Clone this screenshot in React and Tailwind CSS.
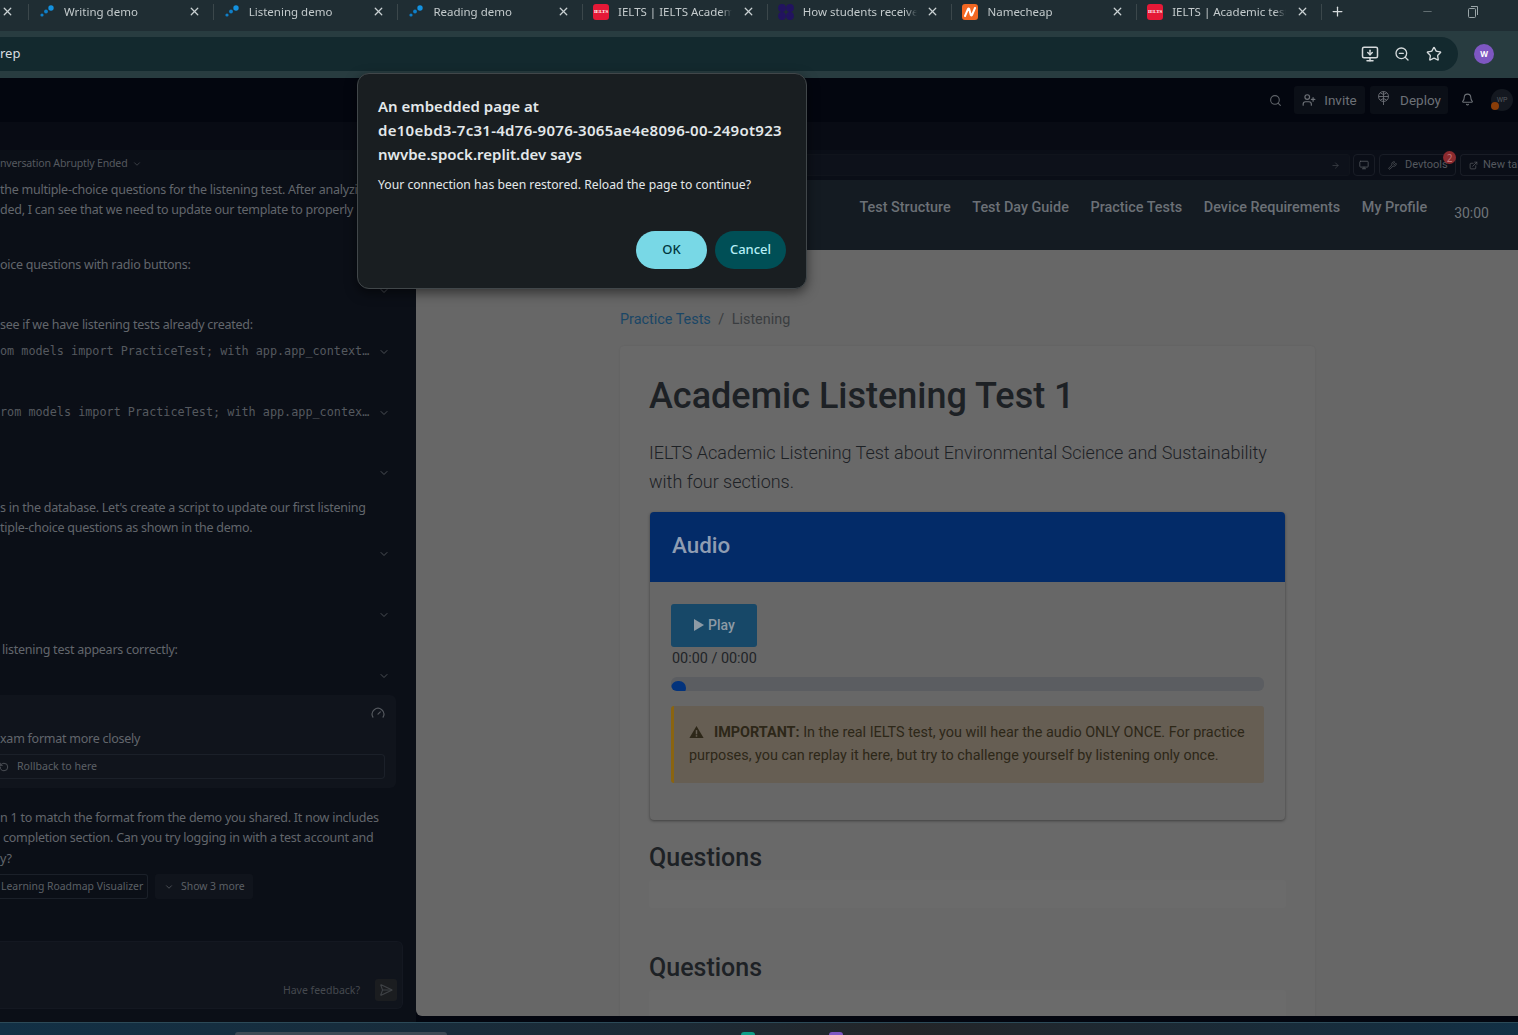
import React from 'react';
import { Bell, ChevronDown, ExternalLink, Gauge, Monitor, MonitorDown, Plus, RotateCcw, Search, SendHorizontal, Star, UserPlus, Wrench, X, ZoomOut, Minus, ArrowRight } from 'lucide-react';

const tabs = [
  { title: 'Writing demo', icon: 'dots' },
  { title: 'Listening demo', icon: 'dots' },
  { title: 'Reading demo', icon: 'dots' },
  { title: 'IELTS | IELTS Academic', icon: 'ielts' },
  { title: 'How students receive', icon: 'grid' },
  { title: 'Namecheap', icon: 'nc' },
  { title: 'IELTS | Academic test', icon: 'ielts' },
];

const Favicon = ({ type }) => {
  if (type === 'dots') {
    return (
      <svg width="16" height="16" viewBox="0 0 16 16" className="shrink-0">
        <circle cx="3" cy="11" r="1.6" fill="#0f7fc9" />
        <circle cx="7" cy="7.5" r="1.9" fill="#0f7fc9" />
        <circle cx="12" cy="4" r="2.7" fill="#1392e0" />
      </svg>
    );
  }
  if (type === 'ielts') {
    return (
      <div className="flex h-4 w-4 shrink-0 items-center justify-center rounded-[3px] bg-[#e51937] font-['Liberation_Serif',serif] text-[5px] font-bold leading-none text-white">
        IELTS
      </div>
    );
  }
  if (type === 'grid') {
    return (
      <svg width="16" height="16" viewBox="0 0 16 16" className="shrink-0">
        <circle cx="4" cy="4" r="3.9" fill="#22135f" />
        <circle cx="12" cy="4" r="3.9" fill="#22135f" />
        <circle cx="4" cy="12" r="3.9" fill="#22135f" />
        <circle cx="12" cy="12" r="3.9" fill="#22135f" />
      </svg>
    );
  }
  return (
    <div className="flex h-4 w-4 shrink-0 items-center justify-center rounded-[3px] bg-[#f26722]">
      <svg width="12" height="10" viewBox="0 0 12 10" fill="none">
        <path d="M1 9 L4 2 Q4.6 1 5.2 2 L6.8 8 Q7.4 9 8 8 L11 1" stroke="#fff" strokeWidth="2" strokeLinecap="round" />
      </svg>
    </div>
  );
};

const Tab = ({ tab }) => (
  <div className="flex h-4 w-[184.7px] shrink-0 items-center border-r border-[#3b474b] pl-[10px] pr-[12px]">
    <Favicon type={tab.icon} />
    <span className="ml-[9px] w-[114px] overflow-hidden whitespace-nowrap text-[11.5px] text-[#c4cbcd] [mask-image:linear-gradient(to_right,black_90%,transparent)]">
      {tab.title}
    </span>
    <X size={13} strokeWidth={2.4} className="ml-auto text-[#c9d0d2]" />
  </div>
);

const Row = ({ children, className = '' }) => (
  <div className={`h-5 whitespace-nowrap text-[12.5px] leading-5 tracking-[-0.25px] text-[#62666c] ${className}`}>{children}</div>
);

const ChevronRow = ({ children, className = '' }) => (
  <div className={`flex h-5 items-center justify-end pr-[26px] ${className}`}>
    {children && (
      <span className="mr-auto whitespace-nowrap font-['DejaVu_Sans_Mono',monospace] text-[11.8px] text-[#55595f]">{children}</span>
    )}
    <ChevronDown size={12} className="shrink-0 text-[#4b4f55]" />
  </div>
);

const Sidebar = () => (
  <aside className="flex w-[416px] shrink-0 flex-col overflow-hidden bg-[#0b0f17] pt-[4px] font-['Noto_Sans',sans-serif]">
    <div className="flex h-5 items-center whitespace-nowrap text-[10.6px] tracking-[-0.2px] text-[#55595f]">
      nversation Abruptly Ended
      <ChevronDown size={10} className="ml-[5px] text-[#43474d]" />
    </div>
    <Row className="mt-[6px]">the multiple-choice questions for the listening test. After analyzing the demo</Row>
    <Row>ded, I can see that we need to update our template to properly</Row>
    <Row className="mt-[35px]">oice questions with radio buttons:</Row>
    <ChevronRow className="mt-[6px]" />
    <Row className="mt-[14px]">see if we have listening tests already created:</Row>
    <ChevronRow className="mt-[7px]">om models import PracticeTest; with app.app_context…</ChevronRow>
    <ChevronRow className="mt-[41px]">rom models import PracticeTest; with app.app_contex…</ChevronRow>
    <ChevronRow className="mt-[40px]" />
    <Row className="mt-[15px]">s in the database. Let's create a script to update our first listening</Row>
    <Row>tiple-choice questions as shown in the demo.</Row>
    <ChevronRow className="mt-[6px]" />
    <ChevronRow className="mt-[41px]" />
    <Row className="mt-[15px] pl-[2px]">listening test appears correctly:</Row>
    <ChevronRow className="mt-[6px]" />

    <div className="mt-[9px] flex h-[93px] w-[396px] shrink-0 flex-col rounded-r-[6px] bg-[#10141c] pr-[11px] pt-[11px]">
      <Gauge size={14} className="self-end text-[#55595f]" />
      <div className="mt-[9px] h-5 whitespace-nowrap text-[12.5px] leading-5 tracking-[-0.25px] text-[#62666c]">xam format more closely</div>
      <div className="mt-[5px] flex h-[25px] items-center rounded-r-[4px] border border-l-0 border-[#1b2029] text-[10.6px] text-[#5c6066]">
        <RotateCcw size={10} className="-ml-[1px] text-[#55595f]" />
        <span className="ml-[8px]">Rollback to here</span>
      </div>
    </div>

    <Row className="mt-[20px]">n 1 to match the format from the demo you shared. It now includes</Row>
    <Row>&nbsp;completion section. Can you try logging in with a test account and</Row>
    <Row className="mt-px">y?</Row>
    <div className="mt-[5px] flex h-[25px] shrink-0 items-stretch text-[10.4px] text-[#5c6066]">
      <div className="flex w-[148px] items-center rounded-r-[3px] border border-l-0 border-[#1b2029] pl-px">Learning Roadmap Visualizer</div>
      <div className="ml-[7px] flex w-[98px] items-center rounded-[3px] bg-[#10141c] pl-[9px]">
        <ChevronDown size={10} className="text-[#55595f]" />
        <span className="ml-[7px]">Show 3 more</span>
      </div>
    </div>

    <div className="mt-[42px] flex h-[68px] w-[403px] shrink-0 items-end justify-end rounded-r-[6px] border border-l-0 border-[#141821] bg-[#10141c] pb-[7px] pr-[5px]">
      <span className="mb-[2px] mr-[15px] text-[10.5px] text-[#45494f]">Have feedback?</span>
      <div className="flex h-[22px] w-[22px] items-center justify-center rounded-[3px] bg-[#1b1d20]">
        <SendHorizontal size={14} className="text-[#3f4246]" />
      </div>
    </div>
  </aside>
);

const PreviewToolbar = () => (
  <div className="flex h-[30px] shrink-0 items-center gap-[3px] bg-[#0a0e17] pl-[8px] text-[11px] text-[#55595f]">
    <div className="flex h-[22px] flex-1 items-center justify-end rounded-[3px] border border-[#10141c] bg-[#0d111a] pr-[9px]">
      <ArrowRight size={9} className="text-[#3f4349]" />
    </div>
    <div className="flex h-[22px] w-[22px] items-center justify-center rounded-[4px] border border-[#191d26]">
      <Monitor size={10} />
    </div>
    <div className="relative ml-px flex h-[22px] w-[77px] items-center rounded-[4px] border border-[#191d26] pl-[8px]">
      <Wrench size={9} className="shrink-0" />
      <span className="ml-[8px] mt-px font-['Roboto',sans-serif]">Devtools</span>
      <span className="absolute -top-[4px] -right-[1px] flex h-[13px] w-[13px] items-center justify-center rounded-full bg-[#8b2a2e] text-[10px] leading-none text-[#c2787a]">2</span>
    </div>
    <div className="ml-px flex h-[22px] w-[58px] shrink-0 items-center overflow-hidden whitespace-nowrap rounded-l-[4px] border border-r-0 border-[#191d26] pl-[8px]">
      <ExternalLink size={9} className="shrink-0" />
      <span className="ml-[5px] mt-px font-['Roboto',sans-serif]">New tab</span>
    </div>
  </div>
);

const AppNav = () => (
  <nav className="flex h-[70px] shrink-0 items-start justify-end bg-[#141b22] pr-[29px] font-['Roboto',sans-serif] text-[14.4px] font-medium text-[#6b7076]">
    <a className="mt-[17px]">Test Structure</a>
    <a className="ml-[21.7px] mt-[17px]">Test Day Guide</a>
    <a className="ml-[21.7px] mt-[17px]">Practice Tests</a>
    <a className="ml-[21.7px] mt-[17px]">Device Requirements</a>
    <a className="ml-[21.7px] mt-[17px]">My Profile</a>
    <span className="ml-[27px] mt-[23px] text-[14px] font-normal text-[#6f7479]">30:00</span>
  </nav>
);

const AudioCard = () => (
  <section className="mx-px mt-[16px] rounded-[4px] bg-[#676767] shadow-[0_1px_3px_rgba(0,0,0,0.4)]">
    <div className="flex h-[70px] items-center rounded-t-[4px] bg-[#032b68] px-[22px] pb-[2px] text-[22.4px] font-medium text-[#8f9db2]">Audio</div>
    <div className="h-[238px] px-[21px] pt-[22px]">
      <button className="flex h-[43px] w-[86px] items-center justify-center rounded-[3px] bg-[#174868] pb-px text-[14px] font-medium text-[#8d9aa5]">
        <svg width="12" height="14" viewBox="0 0 12 14" className="mr-[3px]"><path d="M1 1 L11 7 L1 13 Z" fill="#8d9aa5" /></svg>
        Play
      </button>
      <div className="mt-[2px] pl-px text-[14.4px] leading-[20px] text-[#1f2428]">00:00 / 00:00</div>
      <div className="mt-[8px] h-[14px] overflow-hidden rounded-[6px] bg-[#5b5d61]">
        <div className="mt-[4px] h-[14px] w-[15px] rounded-full bg-[#03337c]" />
      </div>
      <div className="mt-[15px] h-[77px] rounded-[3px] border-l-[3px] border-[#8a6410] bg-[#665e53] pl-[15px] pr-[12px] pt-[15px] text-[14.4px] leading-[23px] text-[#2d2718]">
        <svg width="15" height="14" viewBox="0 0 16 14" className="mr-[10px] inline-block align-[-2px]"><path d="M8 0.5 L15.6 13.5 L0.4 13.5 Z" fill="#2d2718" /><rect x="7.2" y="5" width="1.6" height="4.5" fill="#665e53" /><rect x="7.2" y="10.4" width="1.6" height="1.6" fill="#665e53" /></svg>
        <b className="font-bold">IMPORTANT:</b> In the real IELTS test, you will hear the audio ONLY ONCE. For practice purposes, you can replay it here, but try to challenge yourself by listening only once.
      </div>
    </div>
  </section>
);

const Content = () => (
  <main className="min-h-0 flex-1 overflow-hidden rounded-bl-[6px] bg-[#676767] pl-[204px] pr-[203px] pt-[61px] font-['Roboto',sans-serif] text-[#1d2125]">
    <div className="flex h-[18px] items-center text-[14.4px]">
      <a className="text-[#1a4666]">Practice Tests</a>
      <span className="mx-[7.5px] text-[#3a3d40]">/</span>
      <span className="text-[#3a3d40]">Listening</span>
    </div>
    <div className="mt-[17px] h-[700px] rounded-[4px] bg-[#696969] px-[29px] pt-[26px] shadow-[0_0_2px_rgba(0,0,0,0.08)]">
      <h1 className="text-[36px] font-medium leading-[48px]">Academic Listening Test 1</h1>
      <p className="mt-[18px] text-[18px] font-light leading-[29px]">IELTS Academic Listening Test about Environmental Science and Sustainability with four sections.</p>
      <AudioCard />
      <h2 className="mt-[21px] text-[25px] font-medium leading-[34px]">Questions</h2>
      <div className="mt-[5px] h-[28px] rounded-[2px] bg-[#6b6b6b]" />
      <h2 className="mt-[43px] text-[25px] font-medium leading-[34px]">Questions</h2>
      <div className="mt-[5px] h-[28px] rounded-[2px] bg-[#6b6b6b]" />
    </div>
  </main>
);

const Dialog = () => (
  <div className="absolute left-[357px] top-[73px] h-[216px] w-[450px] rounded-[12px] border border-[#41474a] bg-[#191e21] px-[20px] pt-[20px] font-['Noto_Sans',sans-serif] shadow-[0_4px_12px_rgba(0,0,0,0.5)]">
    <h2 className="whitespace-nowrap text-[15px] font-semibold leading-[24px] text-[#e3e8ea]">
      An embedded page at<br /><span className="tracking-[0.28px]">de10ebd3-7c31-4d76-9076-3065ae4e8096-00-249ot923</span><br />nwvbe.spock.replit.dev says
    </h2>
    <p className="mt-[10px] text-[12.2px] leading-[18px] text-[#e3e8ea]">Your connection has been restored. Reload the page to continue?</p>
    <div className="mt-[37px] flex justify-end gap-[8px]">
      <button className="h-[38px] w-[71px] rounded-full bg-[#78d8e6] text-[13px] font-medium text-[#00363d]">OK</button>
      <button className="h-[38px] w-[71px] rounded-full bg-[#004f56] text-[13px] font-medium text-[#b5eef5]">Cancel</button>
    </div>
  </div>
);

const App = () => {
  return (
    <div className="relative flex h-[1035px] w-[1518px] flex-col overflow-hidden bg-[#03060f] font-['Noto_Sans',sans-serif]">
      {/* browser tabs */}
      <div className="flex h-[31px] shrink-0 items-center bg-[#1f2d33] pb-[8px]">
        <div className="flex h-4 w-[29px] shrink-0 items-center justify-end border-r border-[#3b474b] pr-[14px]">
          <X size={13} strokeWidth={2.4} className="text-[#c9d0d2]" />
        </div>
        {tabs.map((tab) => <Tab key={tab.title} tab={tab} />)}
        <Plus size={15} strokeWidth={2} className="ml-[8px] text-[#d5dadc]" />
        <Minus size={13} strokeWidth={1} className="ml-[76px] text-[#9aa5a8]" />
        <svg width="10" height="12" viewBox="0 0 10 12" fill="none" className="ml-[34px]"><rect x="0.5" y="2.5" width="7" height="9" rx="1" stroke="#9aa5a8" /><path d="M3 0.5 H9.5 V9" stroke="#9aa5a8" /></svg>
      </div>

      {/* address bar */}
      <div className="h-[47px] shrink-0 bg-[#283c40] pt-[6px]">
        <div className="flex h-[34px] w-[1458px] items-center rounded-r-full bg-[#13292e] pr-[16px] text-[13px] text-[#d8dde0]">
          rep
          <MonitorDown size={18} className="ml-auto text-[#d5dadc]" />
          <ZoomOut size={16} className="ml-[15px] text-[#d5dadc]" />
          <Star size={16} className="ml-[16px] text-[#d5dadc]" />
        </div>
        <div className="-mt-[27px] ml-[1474px] flex h-5 w-5 items-center justify-center rounded-full bg-[#7e57c2] text-[8px] font-bold text-white">W</div>
      </div>

      {/* replit top bar */}
      <div className="flex h-[44px] shrink-0 items-center justify-end bg-[#03060f] pr-[5px] font-['Roboto',sans-serif] text-[13.5px] text-[#6d7177]">
        <Search size={13} className="text-[#5f6369]" />
        <div className="ml-[12px] flex h-[28px] w-[71px] items-center justify-center rounded-[3px] bg-[#0b0f17]">
          <UserPlus size={14} className="mr-[8px]" />Invite
        </div>
        <div className="ml-[5px] flex h-[28px] w-[78px] items-center justify-center rounded-[3px] bg-[#0b0f17]">
          <svg width="13" height="15" viewBox="0 0 13 15" fill="none" stroke="currentColor" strokeWidth="0.9" className="mr-[10px] -mt-[3px]"><circle cx="6.5" cy="5.5" r="5" /><path d="M1.5 5.5 H11.5 M6.5 .5 V14 M3.5 2 Q6.5 5 9.5 2 M3.5 9 Q6.5 6 9.5 9" /></svg>
          Deploy
        </div>
        <Bell size={13} className="ml-[13px] -mt-[2px]" />
        <div className="relative ml-[17px] flex h-[22px] w-[22px] items-center justify-center rounded-full bg-[#141820] text-[7px] text-[#55595f]">
          WP
          <span className="absolute bottom-[1px] left-0 h-[8px] w-[8px] rounded-full bg-[#8a3d08]" />
        </div>
      </div>
      <div className="h-[28px] shrink-0 bg-[#080b14]" />

      {/* workspace */}
      <div className="flex min-h-0 flex-1">
        <Sidebar />
        <div className="flex min-w-0 flex-1 flex-col pb-[6px]">
          <PreviewToolbar />
          <AppNav />
          <Content />
        </div>
      </div>

      {/* taskbar */}
      <div className="flex h-[13px] shrink-0 items-end overflow-hidden border-t border-[#2c4a58] bg-[linear-gradient(90deg,#123045,#1c2a35_45%,#232528_60%,#123045)]">
        <div className="ml-[235px] h-[3px] w-[212px] rounded-t-[8px] bg-[#3e4a55]" />
        <div className="ml-[294px] h-[3px] w-[14px] rounded-t-full bg-[#0f9d87]" />
        <div className="ml-[74px] h-[3px] w-[14px] rounded-t-full bg-[#7e57c2]" />
      </div>

      <Dialog />
    </div>
  );
};

export default App;
